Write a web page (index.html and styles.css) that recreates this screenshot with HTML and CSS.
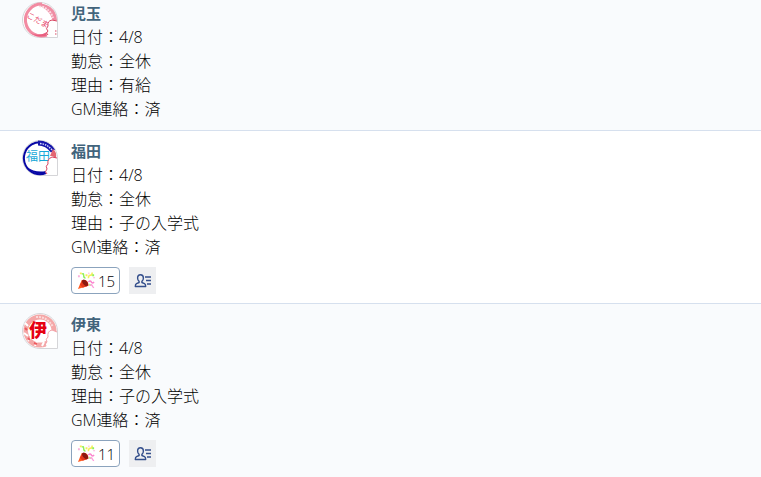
FILE: index.html
```html
<!DOCTYPE html>
<html lang="ja">
<head>
<meta charset="utf-8">
<meta name="viewport" content="width=device-width, initial-scale=1">
<title>勤怠連絡</title>
<link rel="stylesheet" href="styles.css">
</head>
<body>
<svg class="defs" aria-hidden="true">
  <symbol id="party" viewBox="0 0 20 20">
    <path d="M1 18.500 5 9Q12 8 12 15Z" fill="#ff5a1f"/>
    <path d="M3 14 6 9Q12 8 12 15L6 17Z" fill="#e5391b"/>
    <ellipse cx="8.500" cy="12" rx="2.200" ry="4" transform="rotate(-40 8.500 12)" fill="#8b1a10"/>
    <path d="M5 3q2-2 2 1t2 3" fill="none" stroke="#8df05a" stroke-width="1.500"/>
    <path d="M12 7q0-3 2-3t2-3" fill="none" stroke="#f3f05a" stroke-width="1.600"/>
    <path d="M12 11q2-2 3 0t3 0" fill="none" stroke="#fb86cf" stroke-width="1.600"/>
    <path d="M14 15q1-2 2 0t2 2" fill="none" stroke="#ff9bdc" stroke-width="1.500"/>
    <path d="M1 4h2v2H1zM12 1h1v2h-1zM17 6h2v1h-2z" fill="#fbb0dc"/>
    <path d="M3 1h2v2H3zM9 3h2v2H9z" fill="#f7ee55"/>
    <path d="M16 3h2v2h-2zM13 13h1v2h-1z" fill="#8df05a"/>
  </symbol>
  <symbol id="members" viewBox="0 0 18 16">
    <path d="M6.500 1.800C4.600 1.800 3.600 3.200 3.600 5c0 1.500.6 2.700 1.500 3.400v1.100L2.500 10.600Q1.300 11.200 1.300 13.500H11.700Q11.700 11.200 10.500 10.600L7.900 9.500V8.400C8.800 7.700 9.400 6.500 9.400 5 9.400 3.200 8.400 1.800 6.500 1.800Z" fill="none" stroke="#344f8c" stroke-width="1.400" stroke-linejoin="round"/>
    <path d="M11 4h6M12 7.500h5M13 11h4" stroke="#344f8c" stroke-width="1.600"/>
  </symbol>
</svg>
<main class="thread">
  <article class="post">
    <svg class="avatar" viewBox="0 0 36 36" role="img" aria-label="児玉">
      <path d="M18 .5A17.500 17.500 0 1 0 18 35.500H35.500V18A17.500 17.500 0 0 0 18 .5Z" fill="#fff" stroke="#d5d5d8"/>
      <path d="M14 2A17 17 0 0 1 35 18L31 20Q29 8 14 2Z" fill="#ef8da4"/>
      <path d="M17 4q11 2 14 12" fill="none" stroke="#fbdbe2" stroke-width="2" stroke-dasharray="2 1"/>
      <path d="M20 2A16 16 0 1 0 25 33" fill="none" stroke="#f28ba2" stroke-width="3"/>
      <path d="M8 31q9 6 18 2l-1-3Q17 35 8 31Z" fill="#e95f80"/>
      <text class="stamp-pink" x="4" y="15" transform="rotate(28 4 15)">こだま</text>
      <path d="M26 35Q23 31 26 29 23 27 26 24 25 19 30 18L35 19V35Z" fill="#fff"/>
      <path d="M26 33Q23 31 26 29 23 27 26 24 25 19 30 18L35 19M33 29h1.500M33 32h1.500" fill="none" stroke="#d84460"/>
    </svg>
    <div class="body">
      <h2 class="name">児玉</h2>
      <p>日付：4/8</p>
      <p>勤怠：全休</p>
      <p>理由：有給</p>
      <p>GM連絡：済</p>
    </div>
  </article>
  <article class="post">
    <svg class="avatar" viewBox="0 0 36 36" role="img" aria-label="福田">
      <path d="M18 .5A17.500 17.500 0 1 0 18 35.500H35.500V18A17.500 17.500 0 0 0 18 .5Z" fill="#fff" stroke="#d5d5d8"/>
      <path d="M24 33A16 16 0 1 1 31 9" fill="none" stroke="#0707a5" stroke-width="2"/>
      <path d="M16 3Q25 3 31 11" fill="none" stroke="#1616ac" stroke-width="5"/>
      <path d="M18 3.500Q25 4 30 10" fill="none" stroke="#d7daff" stroke-width="1.500" stroke-dasharray="1.500 1"/>
      <path d="M5 27q6 8 18 7l1-3Q13 33 5 27Z" fill="#0707a5"/>
      <text class="stamp-cyan" x="4" y="21">福田</text>
      <path d="M28 16 31 9Q35 12 34 18L30 16Z" fill="#e36672"/>
      <path d="M25 35Q22 32 25 29 23 26 26 24 25 19 30 17L35 19V35Z" fill="#fff"/>
      <path d="M25 34Q22 32 25 29 23 26 26 24 25 19 30 17L35 18" fill="none" stroke="#d84460"/>
    </svg>
    <div class="body">
      <h2 class="name">福田</h2>
      <p>日付：4/8</p>
      <p>勤怠：全休</p>
      <p>理由：子の入学式</p>
      <p>GM連絡：済</p>
      <div class="reactions">
        <button class="reaction" type="button"><svg class="party" aria-hidden="true"><use href="#party"/></svg>15</button>
        <button class="members" type="button" aria-label="メンバー"><svg aria-hidden="true"><use href="#members"/></svg></button>
      </div>
    </div>
  </article>
  <article class="post">
    <svg class="avatar" viewBox="0 0 36 36" role="img" aria-label="伊東">
      <path d="M18 .5A17.500 17.500 0 1 0 18 35.500H35.500V18A17.500 17.500 0 0 0 18 .5Z" fill="#fff" stroke="#d5d5d8"/>
      <circle cx="18" cy="18" r="14" fill="none" stroke="#f4a7a7" stroke-width="5"/>
      <path d="M14 4Q25 3 31 14" fill="none" stroke="#fbdada" stroke-width="2" stroke-dasharray="2 1"/>
      <path d="M3 10l3 3M2 20l4 3M6 28l4-4M13 33l2-5M20 33l2-4" stroke="#fff" stroke-width="2"/>
      <path d="M3 15l2 2M6 25l2 2M12 30l3 1" stroke="#ed5b60" stroke-width="2"/>
      <circle cx="16" cy="18" r="10" fill="#fff"/>
      <text class="stamp-red" x="7" y="24">伊</text>
      <path d="M26 35Q22 33 25 29 23 26 26 24 25 18 30 17L35 19V35Z" fill="#fff"/>
      <path d="M24 33Q22 31 25 29 23 26 26 24 25 18 30 17L35 19" fill="none" stroke="#f3a5ab"/>
    </svg>
    <div class="body">
      <h2 class="name">伊東</h2>
      <p>日付：4/8</p>
      <p>勤怠：全休</p>
      <p>理由：子の入学式</p>
      <p>GM連絡：済</p>
      <div class="reactions">
        <button class="reaction" type="button"><svg class="party" aria-hidden="true"><use href="#party"/></svg>11</button>
        <button class="members" type="button" aria-label="メンバー"><svg aria-hidden="true"><use href="#members"/></svg></button>
      </div>
    </div>
  </article>
</main>
</body>
</html>
```
FILE: styles.css
```css
* { box-sizing: border-box; }
body {
  margin: 0;
  background: #f9fbfd;
  color: #000;
  font: 300 16px/24px "Open Sans", "Noto Sans CJK JP", sans-serif;
}
.defs { position: absolute; width: 0; height: 0; }
.post {
  display: flex;
  gap: 13px;
  padding: 9px 22px;
  border-bottom: 1px solid #d6e0ee;
}
.post:first-child { padding-top: 2px; }
.post:last-child { border-bottom: 0; }
.post:nth-child(even) { background: #fff; }
.avatar { flex: none; width: 36px; height: 36px; }
.body { flex: 1; min-width: 0; }
.name {
  margin: 0;
  color: #42647c;
  font-size: 15px;
  font-weight: 700;
  line-height: 23px;
}
p { margin: 0; }
.reactions { display: flex; gap: 9px; margin-top: 8px; }
button { font: inherit; color: inherit; cursor: pointer; }
.reaction {
  display: flex;
  align-items: center;
  gap: 2px;
  height: 27px;
  padding: 0 4px 0 5px;
  border: 1px solid #8ba3bd;
  border-radius: 4px;
  background: #fff;
  font-size: 15px;
}
.party { width: 19px; height: 20px; }
.members {
  display: grid;
  place-items: center;
  width: 27px;
  height: 27px;
  padding: 0;
  border: 0;
  background: #eeeff1;
}
.members svg { width: 18px; height: 16px; }
.stamp-pink { fill: #e8486f; font-size: 8px; font-weight: 400; }
.stamp-cyan { fill: #18a8d8; font-size: 12px; font-weight: 400; }
.stamp-red { fill: #e60012; font-size: 18px; font-weight: 900; }
```
